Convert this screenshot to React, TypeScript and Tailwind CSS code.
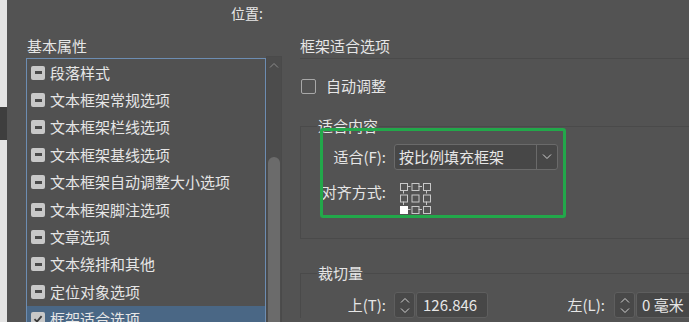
const items = [
  "段落样式",
  "文本框架常规选项",
  "文本框架栏线选项",
  "文本框架基线选项",
  "文本框架自动调整大小选项",
  "文本框架脚注选项",
  "文章选项",
  "文本绕排和其他",
  "定位对象选项",
  "框架适合选项",
];

const ItemIcon = ({ checked }: { checked: boolean }) => (
  <span className="flex h-[14px] w-[14px] shrink-0 items-center justify-center rounded-[2px] bg-[#c8c8c8]">
    {checked ? (
      <svg width="10" height="10" viewBox="0 0 10 10">
        <path d="M1.5 5.2 L4 7.6 L8.6 2.2" fill="none" stroke="#3a3a3a" strokeWidth="1.8" />
      </svg>
    ) : (
      <span className="h-[3px] w-[7px] bg-[#4a4a4a]" />
    )}
  </span>
);

const Chevron = ({ up }: { up?: boolean }) => (
  <svg width="10" height="6" viewBox="0 0 10 6">
    <path
      d={up ? "M1 5.5 L5 1.5 L9 5.5" : "M1 0.5 L5 4.5 L9 0.5"}
      fill="none"
      stroke="#d0d0d0"
      strokeWidth="1"
    />
  </svg>
);

const Spinner = () => (
  <div className="flex h-[26px] w-[21px] shrink-0 flex-col items-center justify-center gap-[5px] rounded-[3px] border border-[#5e5e5e] bg-[#484848]">
    <Chevron up />
    <Chevron />
  </div>
);

// 3x3 reference point grid, bottom-left selected
const AlignGrid = () => {
  const pos = [0, 11.5, 23];
  return (
    <svg width="34" height="34" viewBox="0 0 34 34">
      <g stroke="#c8c8c8" strokeWidth="1" fill="none">
        <path d="M8 4.5 H11.5 M19.5 4.5 H23 M8 27.5 H11.5 M19.5 27.5 H23" />
        <path d="M4.5 8 V11.5 M4.5 19.5 V23 M27.5 8 V11.5 M27.5 19.5 V23" />
        {pos.map((y) =>
          pos.map((x) => (
            <rect
              key={`${x}-${y}`}
              x={x + 1.5}
              y={y + 1.5}
              width="7"
              height="7"
              fill={x === 0 && y === 23 ? "#ffffff" : "none"}
              stroke={x === 0 && y === 23 ? "#ffffff" : "#c8c8c8"}
            />
          ))
        )}
      </g>
    </svg>
  );
};

export default function App() {
  return (
    <div className="flex h-[322px] w-[689px] overflow-hidden bg-[#535353] font-['Noto_Sans_CJK_SC',sans-serif] text-[15px] text-[#e6e6e6]">
      {/* window edge */}
      <div className="flex w-[7px] shrink-0 flex-col bg-[#e4e4e4]">
        <div className="h-[107px]" />
        <div className="h-[33px] bg-[#3e3e3e]" />
      </div>

      {/* left panel */}
      <div className="flex w-[293px] shrink-0 flex-col">
        <div className="h-[26px] pl-[224px] text-[14px] leading-[26px]">位置:</div>
        <div className="mt-[10px] h-[20px] pl-[20px] leading-[20px]">基本属性</div>
        <div className="mt-[2px] flex min-h-0 flex-1 pl-[19px]">
          <div className="w-[240px] border border-b-0 border-[#6d8db2] bg-[#515151]">
            {items.map((item, i) => {
              const selected = i === items.length - 1;
              return (
                <div
                  key={item}
                  className={`flex h-[27.4px] items-center gap-[5px] pl-[4px] leading-[20px] ${
                    selected ? "bg-[#4a6785]" : ""
                  }`}
                >
                  <ItemIcon checked={selected} />
                  <span>{item}</span>
                </div>
              );
            })}
          </div>
          <div className="-mt-[2px] flex w-[16px] flex-col items-center border border-b-0 border-[#4a4a4a] bg-[#4c4c4c]">
            <div className="mt-[5px]">
              <svg width="10" height="6" viewBox="0 0 10 6">
                <path d="M1 5.5 L5 1.5 L9 5.5" fill="none" stroke="#8a8a8a" strokeWidth="1" />
              </svg>
            </div>
            <div className="mt-[89px] w-[12px] flex-1 rounded-t-[6px] bg-[#6b6b6b]" />
          </div>
        </div>
      </div>

      {/* right panel */}
      <div className="flex min-w-0 flex-1 flex-col pt-[33px]">
        <div className="h-[26px] border-b border-[#4a4a4a] leading-[25px]">框架适合选项</div>

        <div className="mt-[17px] flex h-[20px] items-center gap-[10px] pl-[1px]">
          <span className="h-[15px] w-[15px] rounded-[2px] border border-[#a8a8a8]" />
          <span className="leading-[20px]">自动调整</span>
        </div>

        <fieldset className="mt-[20px] w-[420px] border border-[#4a4a4a]">
          <legend className="ml-[16px] px-[1px] leading-[20px]">适合内容</legend>
          <div className="relative pb-[22px] pt-[8px]">
            <div className="flex items-center">
              <span className="w-[85px] text-right leading-[20px]">适合(F):</span>
              <div className="ml-[8px] flex h-[26px] w-[164px] items-center rounded-[3px] border border-[#6a6a6a] bg-[#474747]">
                <span className="flex-1 pl-[4px] leading-[20px]">按比例填充框架</span>
                <span className="flex h-full w-[21px] items-center justify-center border-l border-[#6a6a6a]">
                  <Chevron />
                </span>
              </div>
            </div>
            <div className="mt-[13px] flex items-start">
              <span className="w-[85px] text-right leading-[17px]">对齐方式:</span>
              <div className="-mt-[1px] ml-[13px]">
                <AlignGrid />
              </div>
            </div>
            <div className="absolute -top-[8px] left-[19px] h-[90px] w-[246px] rounded-[3px] border-[3px] border-[#22a84a]" />
          </div>
        </fieldset>

        <fieldset className="mt-[24px] w-[420px] border border-b-0 border-[#4a4a4a]">
          <legend className="ml-[16px] px-[1px] leading-[20px]">裁切量</legend>
          <div className="flex items-center pt-[9px]">
            <span className="w-[85px] text-right leading-[20px]">上(T):</span>
            <div className="ml-[8px] flex">
              <Spinner />
              <div className="ml-[1px] h-[26px] w-[72px] rounded-[3px] border border-[#5e5e5e] bg-[#474747] pl-[6px] leading-[24px]">
                126.846
              </div>
            </div>
            <span className="w-[117px] text-right leading-[20px]">左(L):</span>
            <div className="ml-[9px] flex">
              <Spinner />
              <div className="ml-[1px] h-[26px] w-[72px] rounded-[3px] border border-[#5e5e5e] bg-[#474747] pl-[5px] leading-[24px]">
                0 毫米
              </div>
            </div>
          </div>
        </fieldset>
      </div>
    </div>
  );
}
